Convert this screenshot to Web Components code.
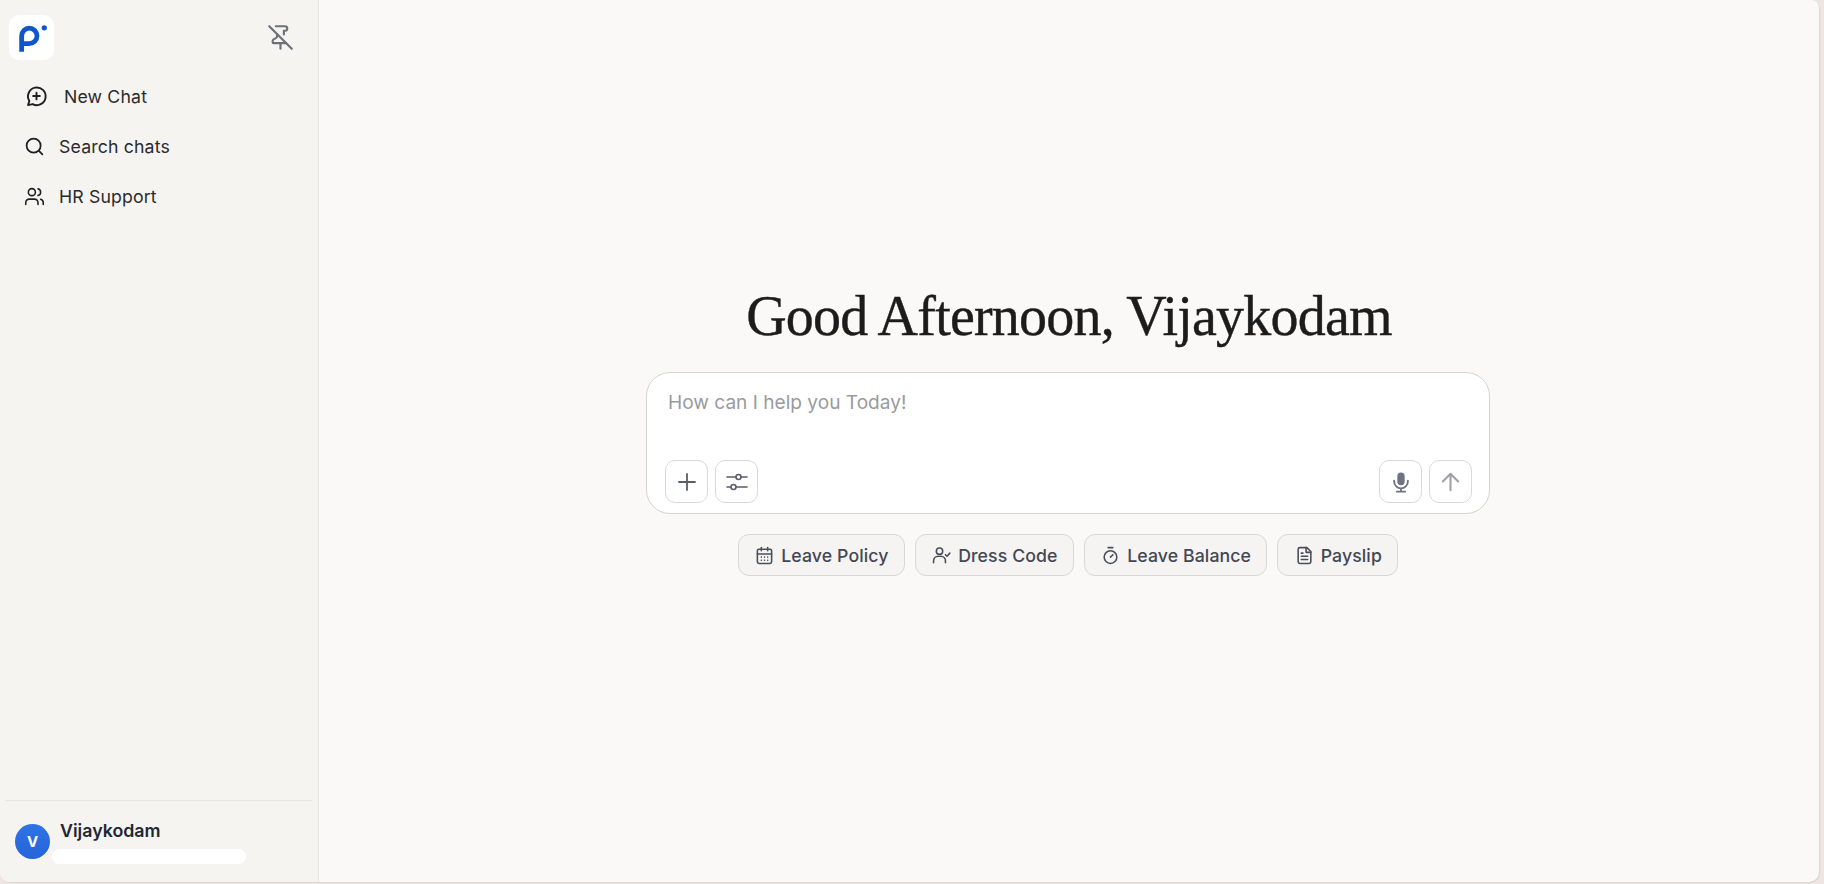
<!DOCTYPE html>
<html lang="en">
<head>
<meta charset="utf-8">
<title>HR Assistant</title>
<style>
  html, body { margin: 0; height: 100%; overflow: hidden; background: #efe6e4; }
  body { font-family: Inter, "Liberation Sans", sans-serif; }
</style>
</head>
<body>
<app-shell>
  <app-sidebar slot="sidebar">
    <nav-item slot="nav" gap="16" pad="25">
      <svg slot="icon" width="23" height="23" viewBox="0 0 24 24" fill="none" stroke="#1f1f1f" stroke-width="2" stroke-linecap="round" stroke-linejoin="round"><path d="M3.2 21l1.3-4.4A9.2 9.2 0 1 1 8 19.9L3.2 21z"/><path d="M12 8v7M8.5 11.5h7"/></svg>
      New Chat
    </nav-item>
    <nav-item slot="nav" gap="14" pad="24">
      <svg slot="icon" width="21" height="21" viewBox="0 0 24 24" fill="none" stroke="#1f1f1f" stroke-width="2" stroke-linecap="round" stroke-linejoin="round"><circle cx="11" cy="11" r="8"/><path d="M21 21l-4.2-4.2"/></svg>
      Search chats
    </nav-item>
    <nav-item slot="nav" gap="14" pad="24">
      <svg slot="icon" width="21" height="21" viewBox="0 0 24 24" fill="none" stroke="#1f1f1f" stroke-width="1.8" stroke-linecap="round" stroke-linejoin="round"><path d="M16 21v-2a4 4 0 0 0-4-4H6a4 4 0 0 0-4 4v2"/><circle cx="9" cy="7" r="4"/><path d="M22 21v-2a4 4 0 0 0-3-3.87"/><path d="M16 3.13a4 4 0 0 1 0 7.75"/></svg>
      HR Support
    </nav-item>
  </app-sidebar>
  <chat-home slot="main" name="Vijaykodam">
    <quick-chip slot="chips">
      <svg slot="icon" width="19" height="19" viewBox="0 0 24 24" fill="none" stroke="#4b4f5a" stroke-width="2" stroke-linecap="round" stroke-linejoin="round"><rect x="3" y="4" width="18" height="18" rx="2"/><path d="M8 2v4M16 2v4M3 10h18M8 14h.01M12 14h.01M16 14h.01M8 18h.01M12 18h.01M16 18h.01"/></svg>
      Leave Policy
    </quick-chip>
    <quick-chip slot="chips">
      <svg slot="icon" width="19" height="19" viewBox="0 0 24 24" fill="none" stroke="#4b4f5a" stroke-width="2" stroke-linecap="round" stroke-linejoin="round"><path d="M2 21v-2a6 6 0 0 1 6-6h3a6 6 0 0 1 6 6v2"/><circle cx="9.5" cy="6.5" r="4"/><path d="M17 11l2 2 3.5-4"/></svg>
      Dress Code
    </quick-chip>
    <quick-chip slot="chips">
      <svg slot="icon" width="19" height="19" viewBox="0 0 24 24" fill="none" stroke="#4b4f5a" stroke-width="2" stroke-linecap="round" stroke-linejoin="round"><path d="M9 2h6"/><circle cx="12" cy="14" r="8"/><path d="M12 14l3-3"/></svg>
      Leave Balance
    </quick-chip>
    <quick-chip slot="chips">
      <svg slot="icon" width="19" height="19" viewBox="0 0 24 24" fill="none" stroke="#4b4f5a" stroke-width="2" stroke-linecap="round" stroke-linejoin="round"><path d="M15 2H6a2 2 0 0 0-2 2v16a2 2 0 0 0 2 2h12a2 2 0 0 0 2-2V7z"/><path d="M14 2v6h6M8 13h8M8 17h8M8 9h2"/></svg>
      Payslip
    </quick-chip>
  </chat-home>
</app-shell>

<script>
// outer window frame: sidebar + main panel
class AppShell extends HTMLElement {
  constructor() {
    super();
    this.attachShadow({ mode: 'open' });
    this.shadowRoot.innerHTML = `
      <style>
        :host { display: block; height: 884px; box-sizing: border-box; padding-right: 5px; padding-bottom: 2px; }
        .frame {
          display: flex; height: 100%; border-radius: 0 8px 10px 10px; overflow: hidden;
          background: #faf9f7;
          box-shadow: 1px 1px 1px #d9d5d2;
        }
      </style>
      <div class="frame">
        <slot name="sidebar"></slot>
        <slot name="main"></slot>
      </div>
    `;
  }
}

class AppSidebar extends HTMLElement {
  constructor() {
    super();
    this.attachShadow({ mode: 'open' });
    this.shadowRoot.innerHTML = `
      <style>
        :host {
          display: flex; flex-direction: column; flex: none; box-sizing: border-box;
          width: 319px; height: 100%; background: #f5f4f1; border-right: 1px solid #e8e6e3;
        }
        .top { display: flex; align-items: center; justify-content: space-between; padding: 15px 24px 0 9px; }
        .logo {
          width: 45px; height: 45px; border-radius: 10px; background: #fff;
          display: flex; align-items: center; justify-content: center;
        }
        nav { display: flex; flex-direction: column; margin-top: 11px; flex: 1; }
        .user {
          display: flex; align-items: flex-start; margin: 0 6px 0 5px; height: 82px; box-sizing: border-box;
          border-top: 1px solid #e7e5e2; padding: 19px 0 0 10px; position: relative;
        }
        .avatar {
          width: 35px; height: 35px; border-radius: 50%; margin-top: 4px; flex: none;
          background: linear-gradient(180deg, #2f74e6, #2563d9);
          color: #fff; font-size: 15px; font-weight: 700;
          display: flex; align-items: center; justify-content: center;
        }
        .name { font-size: 17.8px; font-weight: 600; color: #1f2733; margin-left: 10px; line-height: 22px; }
        .hidden-mail {
          position: absolute; left: 47px; top: 48px; width: 194px; height: 15px;
          background: #fff; border-radius: 8px;
        }
      </style>
      <div class="top">
        <div class="logo">
          <svg width="32" height="32" viewBox="0 0 30 30" fill="none">
            <path d="M5.3 28V13a7.2 7.2 0 1 1 7.2 7.2H5.3" stroke="#0f56c8" stroke-width="4.5"/>
            <circle cx="26.5" cy="5.5" r="2.5" fill="#0f56c8"/>
          </svg>
        </div>
        <svg width="27" height="27" viewBox="0 0 24 24" fill="none" stroke="#6d7078" stroke-width="1.9" stroke-linecap="round" stroke-linejoin="round">
          <path d="M12 17v5"/><path d="M15 9.34V6h1a2 2 0 0 0 0-4H7.89"/><path d="m2 2 20 20"/><path d="M9 9v1.76a2 2 0 0 1-1.11 1.79l-1.78.9A2 2 0 0 0 5 15.24V16a1 1 0 0 0 1 1h11"/>
        </svg>
      </div>
      <nav><slot name="nav"></slot></nav>
      <div class="user">
        <div class="avatar">V</div>
        <div class="name">Vijaykodam</div>
        <div class="hidden-mail"></div>
      </div>
    `;
  }
}

class NavItem extends HTMLElement {
  constructor() {
    super();
    this.attachShadow({ mode: 'open' });
    this.shadowRoot.innerHTML = `
      <style>
        :host {
          display: flex; align-items: center; height: 50px;
          font-size: 17.7px; color: #2b2b2b; letter-spacing: .15px;
        }
        ::slotted(svg) { flex: none; }
      </style>
      <slot name="icon"></slot><span class="label"><slot></slot></span>
    `;
    this.style.paddingLeft = this.getAttribute('pad') + 'px';
    this.shadowRoot.querySelector('.label').style.marginLeft = this.getAttribute('gap') + 'px';
  }
}

class SquareButton extends HTMLElement {
  constructor() {
    super();
    this.attachShadow({ mode: 'open' });
    this.shadowRoot.innerHTML = `
      <style>
        :host {
          display: flex; align-items: center; justify-content: center;
          width: 43px; height: 43px; box-sizing: border-box;
          border: 1px solid #d9d9d9; border-radius: 10px; background: #fff;
        }
      </style>
      <slot></slot>
    `;
  }
}

class ChatBox extends HTMLElement {
  constructor() {
    super();
    this.attachShadow({ mode: 'open' });
    this.shadowRoot.innerHTML = `
      <style>
        :host {
          display: flex; flex-direction: column; justify-content: space-between; box-sizing: border-box;
          width: 844px; height: 142px; padding: 16px 17px 10px 18px;
          background: #fff; border: 1px solid #d4d4d4; border-radius: 24px;
        }
        .placeholder { font-size: 19.1px; color: #9a9a9c; padding-left: 3px; line-height: 27px; }
        .tools { display: flex; justify-content: space-between; }
        .group { display: flex; gap: 7px; }
      </style>
      <div class="placeholder">How can I help you Today!</div>
      <div class="tools">
        <div class="group">
          <square-button>
            <svg width="24" height="24" viewBox="0 0 24 24" fill="none" stroke="#5b5d68" stroke-width="1.8" stroke-linecap="round"><path d="M12 4v16M4 12h16"/></svg>
          </square-button>
          <square-button>
            <svg width="24" height="24" viewBox="0 0 24 24" fill="none" stroke="#5b5d68" stroke-width="1.6" stroke-linecap="round"><path d="M2 7h9M16 7h6M2 17h4M11 17h11"/><circle cx="13.5" cy="7" r="2.5"/><circle cx="8.5" cy="17" r="2.5"/></svg>
          </square-button>
        </div>
        <div class="group">
          <square-button>
            <svg width="22" height="22" viewBox="0 0 24 24" fill="none"><rect x="8" y="1.5" width="8" height="14" rx="4" fill="#6f7280"/><path d="M4.5 10.5v1a7.5 7.5 0 0 0 15 0v-1M12 19v3M7.5 22.5h9" stroke="#6f7280" stroke-width="2" stroke-linecap="round"/></svg>
          </square-button>
          <square-button>
            <svg width="23" height="23" viewBox="0 0 24 24" fill="none" stroke="#a0a1a8" stroke-width="2.2" stroke-linecap="round" stroke-linejoin="round"><path d="M12 21V4M4 12l8-8 8 8"/></svg>
          </square-button>
        </div>
      </div>
    `;
  }
}

class QuickChip extends HTMLElement {
  constructor() {
    super();
    this.attachShadow({ mode: 'open' });
    this.shadowRoot.innerHTML = `
      <style>
        :host {
          display: inline-flex; align-items: center; gap: 7px; box-sizing: border-box;
          height: 42px; padding: 0 15.2px 0 16.4px;
          background: #f5f4f2; border: 1px solid #d8d8d8; border-radius: 11px;
          font-size: 17.7px; font-weight: 500; color: #444753; letter-spacing: .1px; white-space: nowrap;
        }
      </style>
      <slot name="icon"></slot><slot></slot>
    `;
  }
}

class ChatHome extends HTMLElement {
  constructor() {
    super();
    this.attachShadow({ mode: 'open' });
    this.shadowRoot.innerHTML = `
      <style>
        :host {
          display: flex; flex-direction: column; align-items: center; justify-content: center;
          flex: 1; min-width: 0; box-sizing: border-box; padding-bottom: 24px; padding-right: 2px;
        }
        h1 {
          margin: 0 0 22px 2px; font-family: "Liberation Serif", serif; font-weight: 400;
          font-size: 56px; line-height: 68px; color: #1c1c1c; letter-spacing: -.78px;
          -webkit-text-stroke: .4px #1c1c1c;
        }
        .chips { display: flex; gap: 10px; margin-top: 20px; }
      </style>
      <h1></h1>
      <chat-box></chat-box>
      <div class="chips"><slot name="chips"></slot></div>
    `;
    this.shadowRoot.querySelector('h1').textContent = 'Good Afternoon, ' + this.getAttribute('name');
  }
}

customElements.define('app-shell', AppShell);
customElements.define('app-sidebar', AppSidebar);
customElements.define('nav-item', NavItem);
customElements.define('square-button', SquareButton);
customElements.define('chat-box', ChatBox);
customElements.define('quick-chip', QuickChip);
customElements.define('chat-home', ChatHome);
</script>
</body>
</html>
